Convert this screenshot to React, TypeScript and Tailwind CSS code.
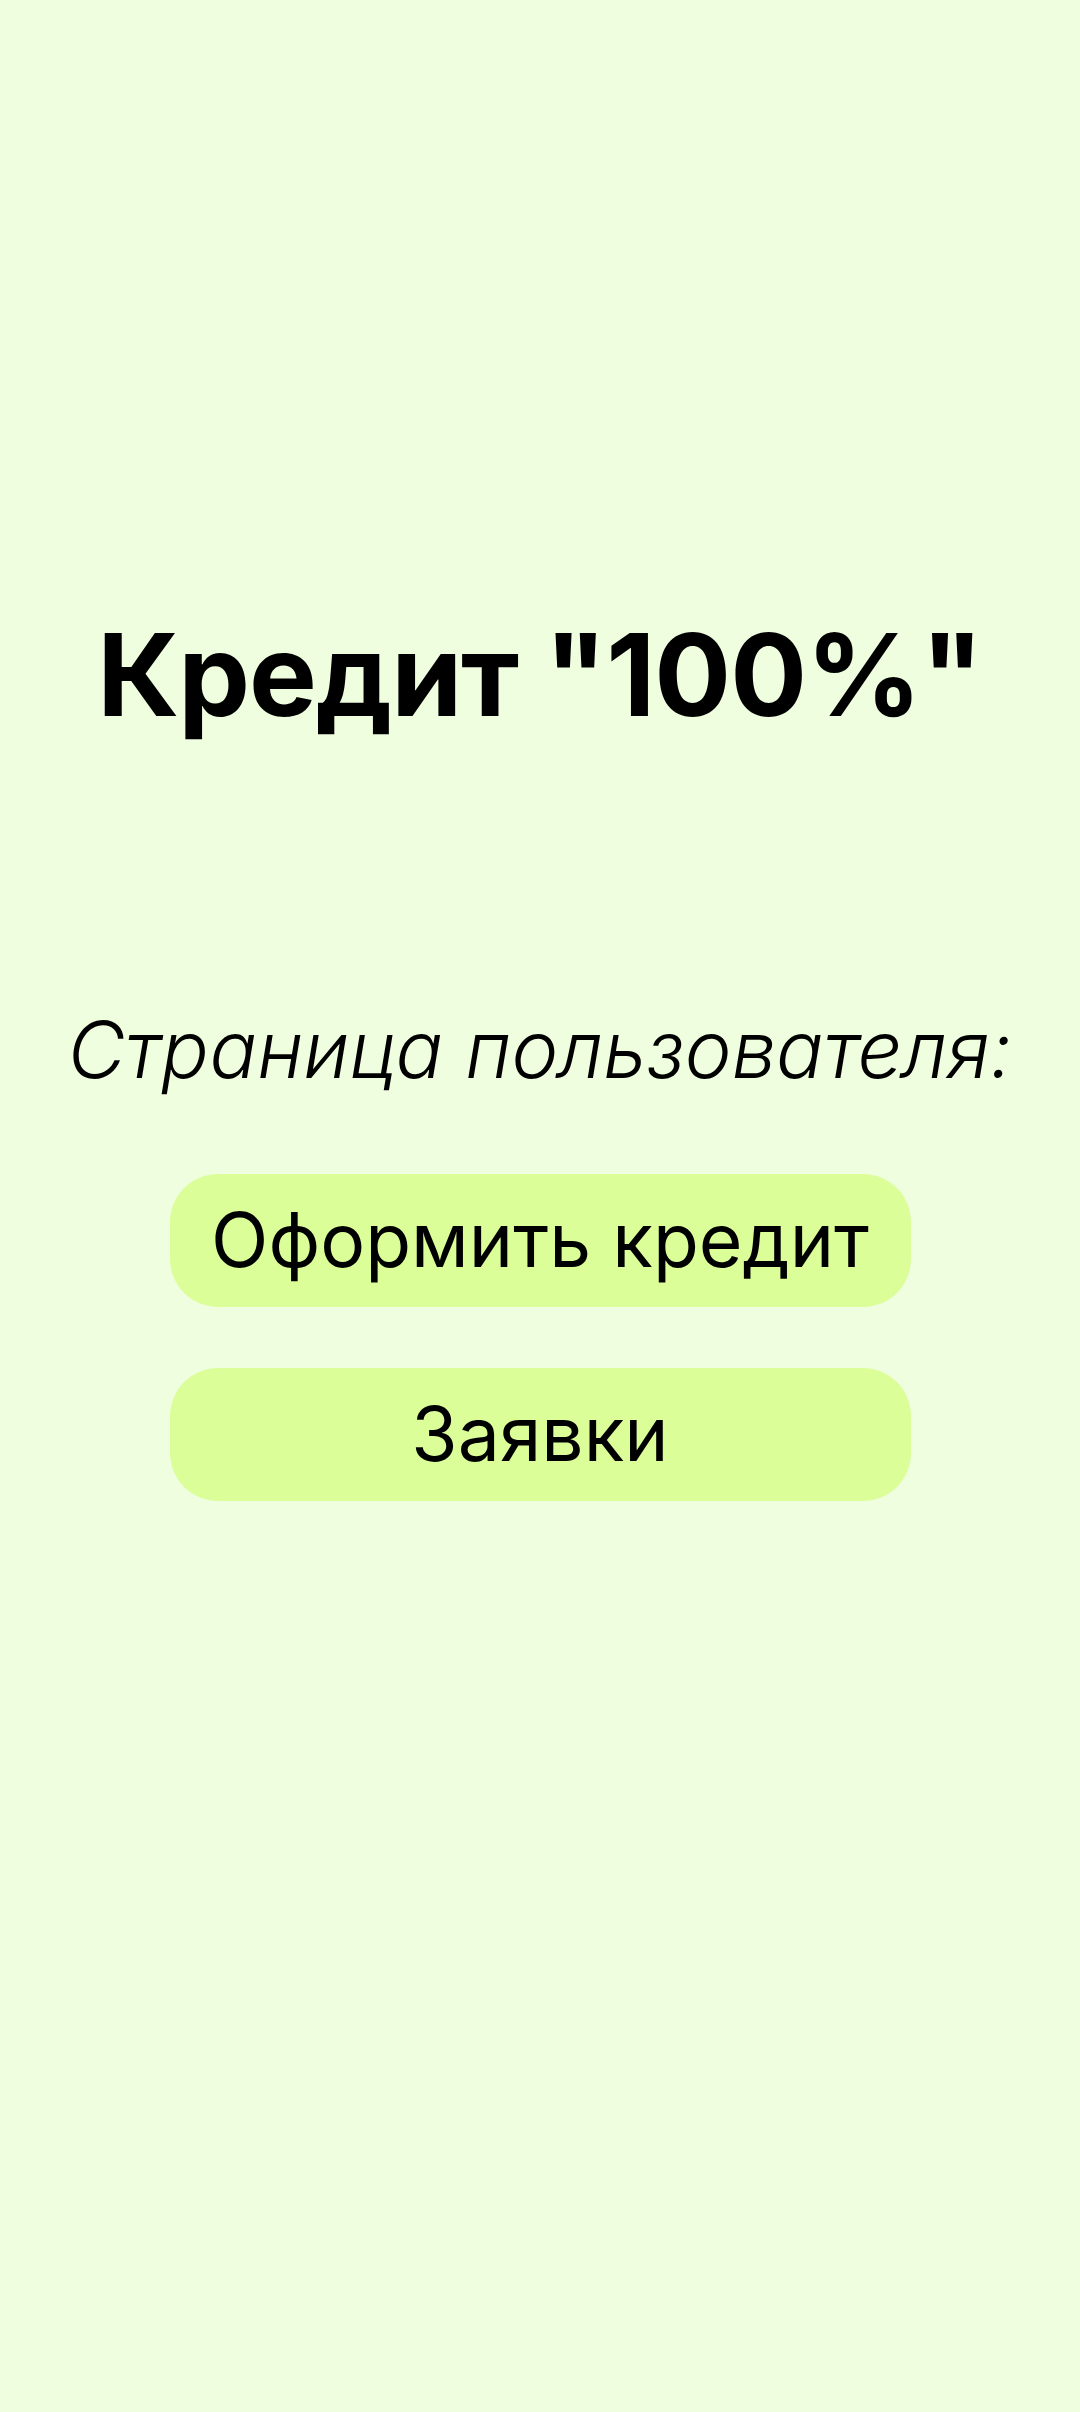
export default function App() {
  return (
    <div
      className="min-h-[2412px] w-full bg-[#f0fee0] flex flex-col items-center text-black"
      style={{ fontFamily: "Inter, 'Noto Sans', sans-serif" }}
    >
      <h1 className="mt-[600px] text-[114px] leading-[150px] font-bold tracking-[-1px]">Кредит "100%"</h1>
      <p className="mt-[249px] text-[79px] leading-[100px] italic font-light">Страница пользователя:</p>
      <div className="mt-[75px] flex flex-col gap-[61px]">
        <button className="w-[741px] h-[133px] rounded-[48px] bg-[#dbfe98] text-[75px] font-normal flex items-center justify-center">
          Оформить кредит
        </button>
        <button className="w-[741px] h-[133px] rounded-[48px] bg-[#dbfe98] text-[75px] font-normal flex items-center justify-center">
          Заявки
        </button>
      </div>
    </div>
  );
}
